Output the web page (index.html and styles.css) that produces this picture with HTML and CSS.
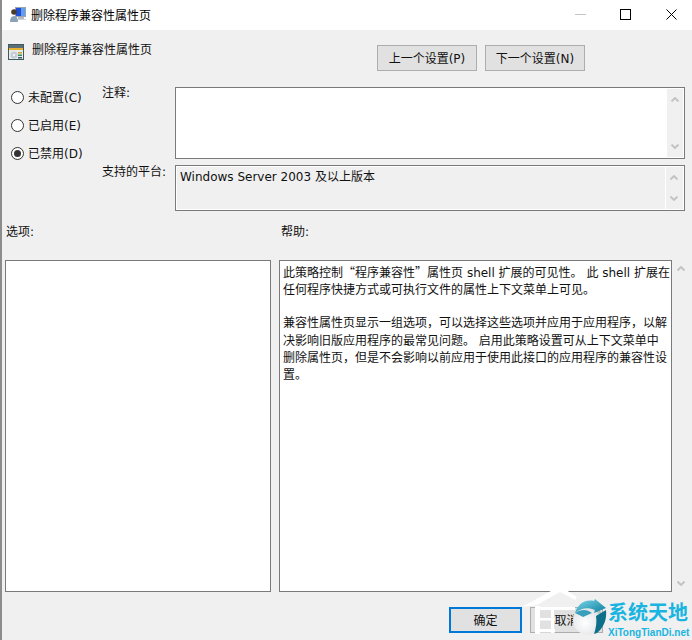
FILE: index.html
```html
<!DOCTYPE html>
<html lang="zh-CN">
<head>
<meta charset="utf-8">
<title>删除程序兼容性属性页</title>
<link rel="stylesheet" href="styles.css">
</head>
<body>
<div class="window">
  <header class="titlebar">
    <svg class="title-icon" viewBox="0 0 16 16" width="16" height="16">
      <rect x="5" y="0" width="11" height="10" fill="#9aa5b1"/>
      <rect x="6" y="1" width="9" height="8" fill="#1f4fd8"/>
      <rect x="11" y="1" width="4" height="8" fill="#5f9fee"/>
      <rect x="8" y="10" width="6" height="2" fill="#b4bac0"/>
      <rect x="6" y="12" width="10" height="1" fill="#cfd4d8"/>
      <circle cx="4" cy="5" r="2.800" fill="#4a3b2c"/>
      <path d="M0 15c0-4 1.500-6 4-6s4 2 4 6z" fill="#8aa2b8"/>
    </svg>
    <span class="title-text">删除程序兼容性属性页</span>
    <div class="controls">
      <svg class="ctl ctl-min" viewBox="0 0 11 11" width="11" height="11"><path d="M0 5.500h11" stroke="#c4c4c4" fill="none"/></svg>
      <svg class="ctl ctl-max" viewBox="0 0 11 11" width="11" height="11"><rect x=".5" y=".5" width="10" height="10" fill="none" stroke="#000"/></svg>
      <svg class="ctl ctl-close" viewBox="0 0 11 11" width="11" height="11"><path d="M.5.500l10 10M10.500.500l-10 10" stroke="#000" fill="none"/></svg>
    </div>
  </header>

  <main class="content">
    <section class="head">
      <div class="policy">
        <svg class="policy-icon" viewBox="0 0 16 16" width="16" height="16">
          <rect x="0" y="0" width="16" height="16" fill="#3f5a5a"/>
          <rect x="1" y="1" width="14" height="3" fill="#5a6f78"/>
          <rect x="1" y="4" width="14" height="2" fill="#e8b030"/>
          <rect x="1" y="6" width="14" height="9" fill="#e6ece8"/>
          <circle cx="6" cy="11" r="3.500" fill="#c8ccd8"/>
          <circle cx="6" cy="11" r="1" fill="#fff"/>
          <rect x="10" y="8" width="4" height="1.500" fill="#d8a030"/>
          <rect x="10" y="10.500" width="4" height="1.500" fill="#3f8a5a"/>
          <rect x="10" y="13" width="4" height="1.500" fill="#3f5a7a"/>
        </svg>
        <span>删除程序兼容性属性页</span>
      </div>
      <div class="nav">
        <button class="btn btn-nav" type="button">上一个设置(P)</button>
        <button class="btn btn-nav" type="button">下一个设置(N)</button>
      </div>
    </section>

    <section class="config">
      <div class="radios">
        <label class="radio"><span class="dot"></span><span class="radio-text">未配置(C)</span></label>
        <label class="radio"><span class="dot"></span><span class="radio-text">已启用(E)</span></label>
        <label class="radio"><span class="dot on"></span><span class="radio-text">已禁用(D)</span></label>
      </div>
      <div class="fields">
        <div class="field-label">注释:</div>
        <div class="box box-note">
          <div class="fill"></div>
          <div class="scroll scroll-note">
            <svg class="chev" viewBox="0 0 8 5" width="8" height="5"><path d="M.5 4.500L4 1l3.500 3.500" /></svg>
            <svg class="chev" viewBox="0 0 8 5" width="8" height="5"><path d="M.5.500L4 4 7.500.500" /></svg>
          </div>
        </div>
        <div class="field-label field-label-low">支持的平台:</div>
        <div class="box box-platform">
          <div class="fill platform-text">Windows Server 2003 及以上版本</div>
          <div class="scroll scroll-platform">
            <svg class="chev" viewBox="0 0 8 5" width="8" height="5"><path d="M.5 4.500L4 1l3.500 3.500" /></svg>
            <svg class="chev" viewBox="0 0 8 5" width="8" height="5"><path d="M.5.500L4 4 7.500.500" /></svg>
          </div>
        </div>
      </div>
    </section>

    <section class="captions">
      <span class="cap-options">选项:</span>
      <span class="cap-help">帮助:</span>
    </section>

    <section class="panels">
      <div class="panel panel-options"></div>
      <div class="panel panel-help">
        <p>此策略控制<span class="cjk">“</span>程序兼容性<span class="cjk">”</span>属性页 shell 扩展的可见性。 此 shell 扩展在<br>任何程序快捷方式或可执行文件的属性上下文菜单上可见。</p>
        <p>兼容性属性页显示一组选项，可以选择这些选项并应用于应用程序，以解<br>决影响旧版应用程序的最常见问题。 启用此策略设置可从上下文菜单中<br>删除属性页，但是不会影响以前应用于使用此接口的应用程序的兼容性设<br>置。</p>
      </div>
      <div class="scroll scroll-help">
        <svg class="chev" viewBox="0 0 8 5" width="8" height="5"><path d="M.5 4.500L4 1l3.500 3.500" /></svg>
        <svg class="chev" viewBox="0 0 8 5" width="8" height="5"><path d="M.5.500L4 4 7.500.500" /></svg>
      </div>
    </section>

    <footer class="actions">
      <button class="btn btn-ok" type="button">确定</button>
      <button class="btn btn-cancel" type="button">取消</button>
    </footer>
  </main>

  <div class="watermark">
    <svg class="wm-house" viewBox="0 0 60 55" width="60" height="55">
      <path d="M2 22L40 1l17 11-2 3-15-8-23 13z" fill="#fff"/>
      <path d="M15 21h5v28h-5z" fill="#fff"/>
      <path d="M20 22h35v3H20zM20 33h15v2.500H20zM20 44h15v3.500H20zM31 23h3v25h-3z" fill="#fff"/>
    </svg>
    <svg class="wm-globe" viewBox="0 0 34 40" width="34" height="40">
      <defs>
        <radialGradient id="ball" cx=".4" cy=".6" r=".7">
          <stop offset="0" stop-color="#ffffff"/>
          <stop offset=".7" stop-color="#e3e6e8"/>
          <stop offset="1" stop-color="#8e979c"/>
        </radialGradient>
        <linearGradient id="arc" x1="0" y1="0" x2="1" y2="1">
          <stop offset="0" stop-color="#7fd8ee"/>
          <stop offset="1" stop-color="#0b7f9c"/>
        </linearGradient>
      </defs>
      <circle cx="15" cy="21" r="15" fill="url(#ball)"/>
      <path d="M2 14C5 4 13 0 21 2l1-2 11 9-12 5 1-3C15 8 8 9 2 14z" fill="url(#arc)"/>
      <path d="M2 14C8 10 14 10 19 14l-9 4C7 16 4 15 2 14z" fill="#3a9fbc"/>
      <path d="M33 11c1 9-2 17-9 23l-3 1c2-6 3-12 2-18z" fill="#0e6f8a"/>
    </svg>
    <div class="wm-text">
      <span class="wm-cn">系统天地</span>
      <span class="wm-en">XiTongTianDi.net</span>
    </div>
  </div>
</div>
</body>
</html>
```

FILE: styles.css
```css
* { box-sizing: border-box; }
html, body { margin: 0; padding: 0; }
body {
  width: 692px;
  height: 640px;
  overflow: hidden;
  font: 12px/16px "DejaVu Sans", "Noto Sans CJK SC", sans-serif;
  color: #111;
  background: #f0f0f0;
}
.cjk { font-family: "Noto Sans CJK SC", sans-serif; }
.window {
  position: relative;
  width: 692px;
  height: 640px;
  overflow: hidden;
  display: flex;
  flex-direction: column;
  border-left: 2px solid #8c8c8c;
}
.titlebar {
  flex: none;
  height: 30px;
  background: #fff;
  display: flex;
  align-items: center;
  padding-left: 8px;
}
.title-icon { flex: none; margin-right: 5px; }
.title-text { color: #000; padding-top: 1px; }
.controls { margin-left: auto; display: flex; align-items: center; }
.ctl { display: block; flex: none; margin-bottom: 2px; }
.ctl-min { margin-right: 34px; }
.ctl-max { margin-right: 35px; }
.ctl-close { margin-right: 15px; }

.content {
  flex: 1;
  display: flex;
  flex-direction: column;
  min-height: 0;
  background: #f0f0f0;
}
.head {
  height: 57px;
  display: flex;
  padding-top: 14px;
}
.policy {
  display: flex;
  align-items: flex-start;
  padding-left: 6px;
  width: 375px;
}
.policy span { margin-left: 8px; line-height: 12px; }
.policy-icon { flex: none; }
.nav { display: flex; gap: 8px; padding-top: 1px; }
.btn {
  font: inherit;
  color: #111;
  height: 26px;
  padding: 2px 0 0;
  background: #e1e1e1;
  border: 1px solid #adadad;
  border-radius: 0;
}
.btn-nav { width: 100px; }

.config { display: flex; height: 124px; }
.radios {
  width: 100px;
  display: flex;
  flex-direction: column;
  gap: 8px;
  padding-left: 9px;
}
.radio { display: flex; align-items: center; height: 20px; gap: 4px; }
.radio-text { padding-top: 2px; }
.dot {
  width: 13px;
  height: 13px;
  border: 1px solid #333;
  border-radius: 50%;
  background: #fff;
  display: flex;
  align-items: center;
  justify-content: center;
  flex: none;
}
.dot.on::after {
  content: "";
  width: 7px;
  height: 7px;
  border-radius: 50%;
  background: #333;
}
.fields {
  display: grid;
  grid-template-columns: 73px 510px;
  grid-template-rows: 72px 46px;
  row-gap: 6px;
}
.field-label { line-height: 12px; }
.field-label-low { line-height: 14px; }
.box {
  display: flex;
  border: 1px solid #7a7a7a;
  min-width: 0;
}
.box-note { background: #fff; padding: 1px; }
.box-platform { background: #f0f0f0; box-shadow: inset 0 0 0 1px #fff; padding: 1px; }
.fill { flex: 1; min-width: 0; }
.platform-text { padding: 2px 0 0 3px; }
.scroll {
  flex: none;
  width: 16px;
  display: flex;
  flex-direction: column;
  align-items: center;
  justify-content: space-between;
  background: #f0f0f0;
}
.scroll-note { padding: 8px 0; }
.scroll-platform { width: 18px; padding: 8px 2px 8px 0; border-left: 1px solid #fff; }
.chev { display: block; fill: none; stroke: #c4c4c4; stroke-width: 2; }

.captions {
  height: 49px;
  display: flex;
  padding: 13px 0 0 4px;
}
.cap-options { width: 275px; }

.panels { display: flex; height: 332px; padding-left: 3px; }
.panel { background: #fff; border: 1px solid #7a7a7a; }
.panel-options { width: 266px; margin-right: 8px; }
.panel-help { width: 393px; padding: 2px 3px; color: #111; line-height: 17.200px; }
.panel-help p { margin: 0 0 16px; white-space: nowrap; }
.scroll-help { width: 17px; padding: 6px 0; }

.actions { display: flex; gap: 8px; padding: 15px 0 0 447px; }
.btn-ok { width: 73px; border: 2px solid #0078d7; padding-top: 1px; }
.btn-cancel { width: 73px; }

.watermark {
  position: absolute;
  left: 518px;
  top: 585px;
  width: 172px;
  height: 55px;
}
.wm-house { position: absolute; left: 0; top: 0; }
.wm-globe { position: absolute; left: 53px; top: 14px; }
.wm-text {
  position: absolute;
  left: 88px;
  top: 15px;
  display: flex;
  flex-direction: column;
  color: #19b5e0;
  font-weight: 700;
  white-space: nowrap;
}
.wm-cn { font: 700 20px/24px "Noto Sans CJK SC", sans-serif; }
.wm-en { font: 700 10px/12px "Liberation Sans", sans-serif; margin-top: 3px; }
```
